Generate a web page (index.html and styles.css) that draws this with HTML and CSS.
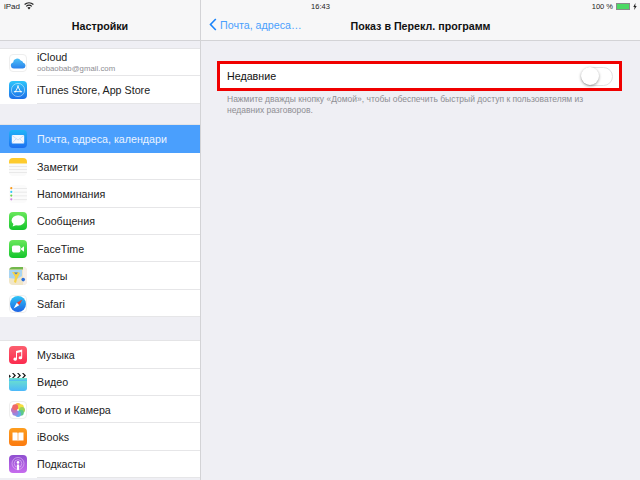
FILE: index.html
```html
<!DOCTYPE html>
<html lang="ru">
<head>
    <meta charset="UTF-8">
    <title>Настройки</title>
    <link rel="stylesheet" href="styles.css">
</head>
<body>
<div class="statusbar">
    <div class="status-left">
        <span>iPad</span>
        <svg width="10" height="8" viewBox="0 0 10 8"><path d="M5 7.600 3.400 5.700a2.400 2.400 0 0 1 3.200 0zM2.600 4.800l-.8-.9a4.900 4.900 0 0 1 6.400 0l-.8.9a3.700 3.700 0 0 0-4.800 0zM1 3 .2 2.100a7.300 7.300 0 0 1 9.600 0L9 3a6.100 6.100 0 0 0-8 0z" fill="#222"/></svg>
    </div>
    <div class="status-time">16:43</div>
    <div class="status-right">
        <span>100 %</span>
        <span class="battery"><span class="battery-fill"></span></span>
        <svg width="4" height="7" viewBox="0 0 4 7"><path d="M2.400 0 .3 3.900h1.300L1.200 7l2.500-4H2.300z" fill="#222"/></svg>
    </div>
</div>

<div class="screen">
    <aside class="sidebar">
        <div class="navbar navbar-title">Настройки</div>
        <div class="sidebar-list">
            <div class="group group-first">
                <div class="row row-icloud">
                    <span class="icon icon-plain"><svg viewBox="0 0 18 18"><defs><linearGradient id="cl" x1="0" y1="0" x2="0" y2="1"><stop offset="0" stop-color="#4cc0f7"/><stop offset="1" stop-color="#2a82ec"/></linearGradient></defs><path d="M5 14.500a3 3 0 0 1-.9-5.900 4.200 4.200 0 0 1 7.600-2.200 3.200 3.200 0 0 1 2.500 2.300 2.950 2.950 0 0 1-.2 5.800z" fill="url(#cl)"/></svg></span>
                    <div class="row-label">
                        <div>iCloud</div>
                        <div class="row-sub">oobaobab@gmail.com</div>
                    </div>
                </div>
                <div class="row">
                    <span class="icon"><svg viewBox="0 0 18 18"><defs><linearGradient id="as" x1="0" y1="0" x2="0" y2="1"><stop offset="0" stop-color="#2dc6fb"/><stop offset="1" stop-color="#1d6fe8"/></linearGradient></defs><rect width="18" height="18" fill="url(#as)"/><circle cx="9" cy="9" r="6.600" fill="none" stroke="#fff" stroke-width=".6" opacity=".8"/><path d="M9.600 4.500 6 11.500M8.400 4.500l3.600 7M4.900 10.600h8.200" fill="none" stroke="#fff" stroke-width=".9"/></svg></span>
                    <div class="row-label">iTunes Store, App Store</div>
                </div>
            </div>

            <div class="group group-second">
                <div class="row row-active">
                    <span class="icon"><svg viewBox="0 0 18 18"><defs><linearGradient id="ml" x1="0" y1="0" x2="0" y2="1"><stop offset="0" stop-color="#1fb4f8"/><stop offset="1" stop-color="#1c6ff0"/></linearGradient></defs><rect width="18" height="18" fill="url(#ml)"/><rect x="2.800" y="5" width="12.400" height="8.600" rx=".8" fill="#f2f8ff"/><path d="M3 5.400 9 10l6-4.600M3 13.200l4.200-4.400M15 13.200l-4.200-4.400" fill="none" stroke="#a9c8ee" stroke-width=".5"/></svg></span>
                    <div class="row-label">Почта, адреса, календари</div>
                </div>
                <div class="row">
                    <span class="icon"><svg viewBox="0 0 18 18"><rect width="18" height="18" fill="#fafafa"/><rect width="18" height="5.500" fill="#fdcb2e"/><path d="M0 8.500h18M0 11.500h18M0 14.500h18" stroke="#ddd" stroke-width=".6"/></svg></span>
                    <div class="row-label">Заметки</div>
                </div>
                <div class="row">
                    <span class="icon"><svg viewBox="0 0 18 18"><rect width="18" height="18" fill="#fbfbfb"/><path d="M4.500 3.500H18M4.500 7.200H18M4.500 10.900H18M4.500 14.600H18" stroke="#ddd" stroke-width=".6"/><circle cx="2.300" cy="3.200" r="1.100" fill="#f89a1c"/><circle cx="2.300" cy="6.900" r="1.100" fill="#34c8f4"/><circle cx="2.300" cy="10.600" r="1.100" fill="#6ad24a"/><circle cx="2.300" cy="14.300" r="1.100" fill="#d080e0"/></svg></span>
                    <div class="row-label">Напоминания</div>
                </div>
                <div class="row">
                    <span class="icon"><svg viewBox="0 0 18 18"><defs><linearGradient id="gr" x1="0" y1="0" x2="0" y2="1"><stop offset="0" stop-color="#6ae85c"/><stop offset="1" stop-color="#14c52c"/></linearGradient></defs><rect width="18" height="18" fill="url(#gr)"/><ellipse cx="9.200" cy="8.400" rx="6.600" ry="5.200" fill="#fff"/><path d="M4.600 11.400 3.600 14.400 7.400 13z" fill="#fff"/></svg></span>
                    <div class="row-label">Сообщения</div>
                </div>
                <div class="row">
                    <span class="icon"><svg viewBox="0 0 18 18"><defs><linearGradient id="ft" x1="0" y1="0" x2="0" y2="1"><stop offset="0" stop-color="#6ae85c"/><stop offset="1" stop-color="#14c52c"/></linearGradient></defs><rect width="18" height="18" fill="url(#ft)"/><rect x="3" y="5.600" width="8.400" height="6.800" rx="1.600" fill="#fff"/><path d="m12 8.400 3-2.200v5.600l-3-2.200z" fill="#fff"/></svg></span>
                    <div class="row-label">FaceTime</div>
                </div>
                <div class="row">
                    <span class="icon"><svg viewBox="0 0 18 18"><rect width="18" height="18" fill="#f0e6c8"/><path d="M0 0h14v2.500H0z" fill="#72b84c"/><path d="M14 0h4v18h-4z" fill="#f7eee8"/><path d="M0 3h13v6l-5 3-8-1z" fill="#a8d4f2"/><path d="M3 5h6l2 1-3 6-1 4-2-1 1-5z" fill="#f6d34a"/><path d="M5 5.500h4l-2 2z" fill="#3b82e0"/><circle cx="14.200" cy="12.600" r="1.800" fill="#2b6fd8"/></svg></span>
                    <div class="row-label">Карты</div>
                </div>
                <div class="row">
                    <span class="icon icon-plain"><svg viewBox="0 0 18 18"><defs><linearGradient id="sf" x1="0" y1="0" x2="0" y2="1"><stop offset="0" stop-color="#2fc4f6"/><stop offset="1" stop-color="#1d62e4"/></linearGradient></defs><circle cx="9" cy="9" r="8" fill="url(#sf)"/><path d="M13.400 4.600 7.800 7.800 10.200 10.200z" fill="#f4402e"/><path d="M4.600 13.400 7.800 7.800 10.200 10.200z" fill="#fff"/></svg></span>
                    <div class="row-label">Safari</div>
                </div>
            </div>

            <div class="group">
                <div class="row">
                    <span class="icon"><svg viewBox="0 0 18 18"><defs><linearGradient id="mu" x1="0" y1="0" x2="0" y2="1"><stop offset="0" stop-color="#fc5f6e"/><stop offset="1" stop-color="#fb2a4e"/></linearGradient></defs><rect width="18" height="18" fill="url(#mu)"/><path d="M7 4.900 13.200 3.400v8.400a1.800 1.500 0 1 1-1-1.300V6L8 7v6.100a1.800 1.500 0 1 1-1-1.300z" fill="#fff"/></svg></span>
                    <div class="row-label">Музыка</div>
                </div>
                <div class="row">
                    <span class="icon icon-video"><svg viewBox="0 0 18 18"><defs><linearGradient id="vd" x1="0" y1="0" x2="0" y2="1"><stop offset="0" stop-color="#6fe6c8"/><stop offset="1" stop-color="#4cb8fa"/></linearGradient></defs><rect y="5" width="18" height="13" rx="3" fill="url(#vd)"/><rect y="5" width="18" height="3" fill="url(#vd)"/><path d="M0 1.500 2 3.200 0 5zM3 0h1.500l2.500 2.500L4.500 5H3l2.200-2.500zM8 0h1.500L12 2.500 9.500 5H8l2.200-2.500zM13 0h1.500L17 2.500 14.500 5H13l2.200-2.500z" fill="#1c1c1c"/></svg></span>
                    <div class="row-label">Видео</div>
                </div>
                <div class="row">
                    <span class="icon icon-plain"><svg viewBox="0 0 18 18"><g opacity=".85"><circle cx="9" cy="5" r="3" fill="#f8a52a"/><circle cx="11.800" cy="6.200" r="3" fill="#f4d81e"/><circle cx="13" cy="9" r="3" fill="#8ccb3c"/><circle cx="11.800" cy="11.800" r="3" fill="#3fbf7a"/><circle cx="9" cy="13" r="3" fill="#4a9ae8"/><circle cx="6.200" cy="11.800" r="3" fill="#8a6fd8"/><circle cx="5" cy="9" r="3" fill="#b45cb0"/><circle cx="6.200" cy="6.200" r="3" fill="#ee4e4e"/></g></svg></span>
                    <div class="row-label">Фото и Камера</div>
                </div>
                <div class="row">
                    <span class="icon"><svg viewBox="0 0 18 18"><defs><linearGradient id="ib" x1="0" y1="0" x2="0" y2="1"><stop offset="0" stop-color="#fd9d1e"/><stop offset="1" stop-color="#fb7a10"/></linearGradient></defs><rect width="18" height="18" fill="url(#ib)"/><path d="M3.500 4.500h4.500q.7 0 .7 1v8q0-.9-.7-.9H3.500zM14.500 4.500H10q-.7 0-.7 1v8q0-.9.7-.9h4.500z" fill="#fff"/></svg></span>
                    <div class="row-label">iBooks</div>
                </div>
                <div class="row">
                    <span class="icon"><svg viewBox="0 0 18 18"><defs><linearGradient id="pd" x1="0" y1="0" x2="0" y2="1"><stop offset="0" stop-color="#8f4fd0"/><stop offset="1" stop-color="#c76cee"/></linearGradient></defs><rect width="18" height="18" fill="url(#pd)"/><circle cx="9" cy="8.500" r="6" fill="none" stroke="#e8c8f6" stroke-width=".6"/><circle cx="9" cy="8.500" r="3.800" fill="none" stroke="#e8c8f6" stroke-width=".6"/><circle cx="9" cy="7.400" r="1.300" fill="#fff"/><rect x="8" y="9.200" width="2" height="6" rx="1" fill="#fff"/></svg></span>
                    <div class="row-label">Подкасты</div>
                </div>
            </div>
        </div>
    </aside>

    <main class="detail">
        <div class="navbar detail-nav">
            <div class="back">
                <svg width="8" height="13" viewBox="0 0 8 13"><path d="M6.800 1 1.500 6.500l5.300 5.500" fill="none" stroke="#1a84fb" stroke-width="1.600"/></svg>
                <span>Почта, адреса…</span>
            </div>
            <div class="detail-title">Показ в Перекл. программ</div>
        </div>
        <div class="detail-body">
            <div class="setting">
                <span>Недавние</span>
                <span class="toggle"><span class="toggle-knob"></span></span>
            </div>
            <p class="hint">Нажмите дважды кнопку «Домой», чтобы обеспечить быстрый доступ к пользователям из недавних разговоров.</p>
        </div>
    </main>
</div>
</body>
</html>
```

FILE: styles.css
```css
* {
    box-sizing: border-box;
}

html, body {
    margin: 0;
    height: 100%;
    overflow: hidden;
}

body {
    font-family: 'Liberation Sans', Arial, sans-serif;
    background-color: #efeff4;
    color: #1c1c1c;
    position: relative;
}

/* status bar lies over both nav bars */
.statusbar {
    position: absolute;
    top: 0;
    left: 0;
    z-index: 2;
    width: 640px;
    height: 12px;
    padding: 0 3px 0 4px;
    display: flex;
    align-items: center;
    justify-content: space-between;
    font-size: 8px;
    color: #222;
}

.status-left, .status-right {
    width: 150px;
    display: flex;
    align-items: center;
    gap: 4px;
}

.status-right {
    justify-content: flex-end;
    gap: 3px;
    font-size: 7.500px;
}

.status-time {
    font-size: 7.500px;
}

.battery {
    width: 14px;
    height: 7px;
    border: 1px solid #8a8a8a;
    display: block;
}

.battery-fill {
    display: block;
    height: 100%;
    background-color: #4cd964;
}

.screen {
    display: flex;
    height: 480px;
}

.navbar {
    height: 41px;
    background-color: #f7f7f8;
    border-bottom: 1px solid #d3d3d6;
}

.navbar-title {
    padding-top: 20px;
    text-align: center;
    font-size: 10.700px;
    font-weight: bold;
    color: #111;
}

.sidebar {
    width: 201px;
    flex: none;
    border-right: 1px solid #d3d3d6;
    height: 480px;
    overflow: hidden;
}

.sidebar-list {
    padding-top: 7px;
}

.group {
    background-color: #fff;
    border-top: 1px solid #e4e4e6;
}

.group-first {
    margin-bottom: 20.700px;
}

.group-second {
    margin-bottom: 23px;
}

.row {
    height: 27.400px;
    padding-left: 9px;
    display: flex;
    align-items: center;
    gap: 10px;
    font-size: 10.700px;
    color: #222;
    position: relative;
}

.row::after {
    content: '';
    position: absolute;
    left: 37px;
    right: 0;
    bottom: 0;
    height: 1px;
    background-color: #e6e6e8;
}

.row-active {
    background-color: #4a9ffd;
    color: #eaf3ff;
}

.row-active::after {
    display: none;
}

.row-label {
    padding-top: 1px;
    line-height: 11px;
}

.row-sub {
    font-size: 7.800px;
    line-height: 11px;
    color: #8e8e93;
}

.icon {
    width: 18px;
    height: 18px;
    flex: none;
    border-radius: 4px;
    overflow: hidden;
    display: block;
}

.icon svg {
    width: 18px;
    height: 18px;
    display: block;
}

.icon-plain {
    outline: 1px solid #eee;
    outline-offset: -1px;
}

.icon-video {
    border-radius: 0;
}

.detail {
    flex: 1;
}

.detail-nav {
    position: relative;
    padding: 19px 0 0 8px;
    font-size: 10.700px;
}

.back {
    display: flex;
    align-items: center;
    gap: 3px;
    color: #4a9ffd;
}

.back svg {
    margin-top: -1px;
}

/* title is centred on the panel, over the back link */
.detail-title {
    position: absolute;
    top: 20px;
    left: 0;
    right: 0;
    text-align: center;
    font-weight: bold;
    color: #111;
}

.detail-body {
    padding: 20px 18px 0 16px;
}

.setting {
    height: 30px;
    border: 3px solid #f00000;
    background-color: #fff;
    padding: 0 6px 0 7px;
    display: flex;
    align-items: center;
    justify-content: space-between;
    font-size: 10.700px;
    color: #111;
}

.toggle {
    width: 32px;
    height: 19px;
    border-radius: 10px;
    border: 1px solid #e2e2e4;
    background-color: #fff;
    display: block;
}

.toggle-knob {
    display: block;
    width: 18px;
    height: 18px;
    margin: -0.500px 0 0 -1px;
    border-radius: 50%;
    background-color: #fff;
    box-shadow: 0 1px 3px rgba(0, 0, 0, 0.4);
}

.hint {
    margin: 3px 10px 0 10px;
    font-size: 8.500px;
    line-height: 10.500px;
    color: #8e8e93;
}
```
